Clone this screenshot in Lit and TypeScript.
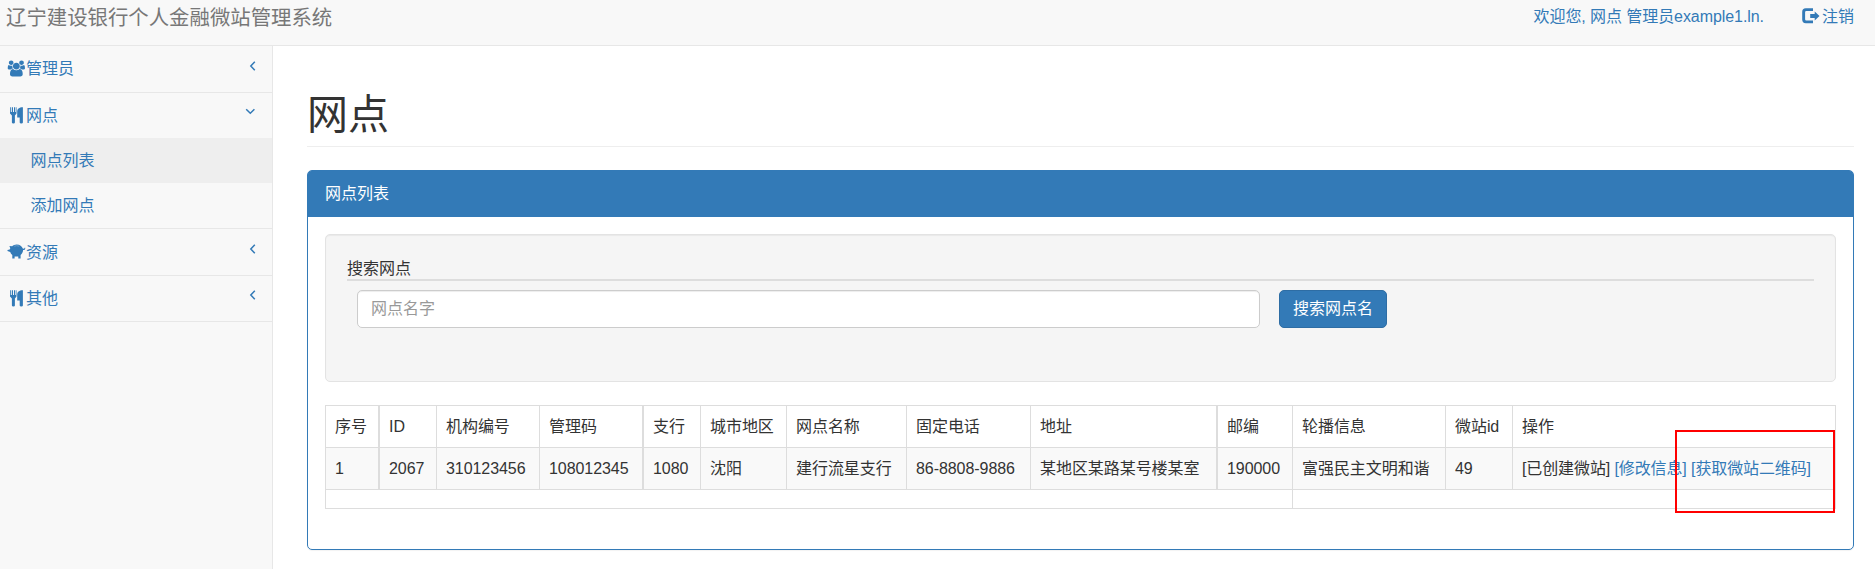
import { LitElement, html, css, svg } from "lit";
import { customElement } from "lit/decorators.js";
import { classMap } from "lit/directives/class-map.js";

const usersIcon = html`<svg class="icon" width="19" height="17" viewBox="-142 -50 2109 1904" preserveAspectRatio="none"><path d="M529 896q-162 5-265 128h-134q-82 0-138-40.500t-56-118.500q0-353 124-353 6 0 43.500 21t97.500 42.500 119 21.500q67 0 133-23-5 37-5 66 0 139 81 256zm1071 637q0 120-73 189.500t-194 69.500h-874q-121 0-194-69.500t-73-189.500q0-53 3.500-103.500t14-109 26.500-108.500 43-97.500 62-81 85.500-53.500 111.500-20q10 0 43 21.500t73 48 107 48 135 21.500 135-21.500 107-48 73-48 43-21.500q61 0 111.500 20t85.500 53.500 62 81 43 97.500 26.500 108.500 14 109 3.500 103.500zm-1024-1277q0 106-75 181t-181 75-181-75-75-181 75-181 181-75 181 75 75 181zm704 384q0 159-112.500 271.500t-271.500 112.500-271.500-112.500-112.500-271.500 112.500-271.500 271.500-112.500 271.500 112.500 112.500 271.500zm576 225q0 78-56 118.500t-138 40.500h-134q-103-123-265-128 81-117 81-256 0-29-5-66 66 23 133 23 59 0 119-21.500t97.500-42.500 43.500-21q124 0 124 353zm-128-609q0 106-75 181t-181 75-181-75-75-181 75-181 181-75 181 75 75 181z"/></svg>`;

const cutleryIcon = html`<svg class="icon" width="19" height="17" viewBox="0 0 19 17"><path d="M3 .2h.8V5h1V.2h1.200V5h1V.2h1.200V5h.7V.2h.6v6.300L7.900 8.400V15.400Q7.900 16.500 6.400 16.500T4.900 15.400V8.400L3 6.500zM15.900.2V15.400Q15.900 16.500 14.300 16.500T12.700 15.400V10.400H10.200V4.500C10.300 2 12 .2 15.900.2z"/></svg>`;

const piggyIcon = html`<svg class="icon" width="19" height="17" viewBox="0 0 19 17"><path d="M3.300 4.300 2.400 2.100 5.200 2.300C6.200 1.100 7.700.4 9.700.4c3.200 0 5.300 1.700 6.100 4.200l1 .1c.5 0 .7-.3.7-1h.8c0 1.500-.6 2.300-1.700 2.300l-.5 0c-.1 2-1 3.800-2.500 4.900v3.500h-2.300v-2H7.600v2H5.300V10.900C4.300 10.200 3.600 9.200 3.200 8L.5 7.100V5.900L2.700 5.500z"/><path class="slot" d="M7.200 2.200q2.500-1 5 0" /></svg>`;

const logoutIcon = html`<svg class="icon" width="18" height="16" viewBox="0 0 18 16"><path d="M11 .3H3.800Q.2.300.2 3.900v7.700q0 3.600 3.600 3.600H11v-2.700H4.300Q3.100 12.500 3.100 11.300V4.300Q3.100 3 4.300 3H11zM17.500 8 12.700 3.500v2.400H8.200v4.200h4.500v2.400z"/></svg>`;

interface Entry {
  label: string;
  icon: unknown;
  size: string;
  open?: boolean;
  children?: string[];
}

const ENTRIES: Entry[] = [
  { label: "管理员", icon: usersIcon, size: "tall first" },
  { label: "网点", icon: cutleryIcon, size: "short", open: true, children: ["网点列表", "添加网点"] },
  { label: "资源", icon: piggyIcon, size: "tall" },
  { label: "其他", icon: cutleryIcon, size: "short" },
];

@customElement("side-menu")
export class SideMenu extends LitElement {
  static styles = css`
    :host { display: block; width: 272px; flex: none; background: #f8f8f8; border-right: 1px solid #e7e7e7; }
    .group { border-bottom: 1px solid #e7e7e7; }
    .row { display: flex; align-items: center; box-sizing: border-box; height: 45px; padding: 0 15px 0 7px; color: #337ab7; }
    .row.tall { height: 46px; }
    .row.first { padding-bottom: 2px; }
    .label { flex: 1; }
    .icon { display: block; fill: currentColor; flex: none; }
    .slot { fill: none; stroke: #8db5d9; stroke-width: .6; }
    .arrow { display: block; fill: none; stroke: currentColor; stroke-width: 1.500; margin-bottom: 7px; }
    .first .arrow { margin-bottom: 4px; }
    .child { display: flex; align-items: center; height: 45px; padding-left: 30.500px; color: #337ab7; }
    .child.active { background: #eee; }
  `;
  render() {
    return ENTRIES.map(
      (e) => html`<div class="group">
        <div class="row ${e.size}">
          ${e.icon}<span class="label">${e.label}</span>
          <svg class="arrow" width="12" height="12" viewBox="0 0 12 12">
            ${e.open ? svg`<path d="M1.200 3.200 5.300 7.200 9.400 3.200"/>` : svg`<path d="M9.800 1.700 5.800 6 9.800 10.300"/>`}
          </svg>
        </div>
        ${(e.children ?? []).map((c, i) => html`<div class=${classMap({ child: true, active: i === 0 })}>${c}</div>`)}
      </div>`
    );
  }
}

const HEADS = ["序号", "ID", "机构编号", "管理码", "支行", "城市地区", "网点名称", "固定电话", "地址", "邮编", "轮播信息", "微站id", "操作"];
const VALUES = ["1", "2067", "310123456", "108012345", "1080", "沈阳", "建行流星支行", "86-8808-9886", "某地区某路某号楼某室", "190000", "富强民主文明和谐", "49"];
const THICK = new Set([0, 3, 8]);

@customElement("branch-table")
export class BranchTable extends LitElement {
  static styles = css`
    :host { display: block; position: relative; }
    .grid { display: grid; grid-template-columns: 54px 57px 103px 104px 57px 86px 120px 124px 187px 75px 153px 67px 323px; grid-template-rows: 42px 42px 19px; border: solid #ddd; border-width: 1px 0 0 1px; }
    .cell { box-sizing: border-box; border: solid #ddd; border-width: 0 1px 1px 0; padding: 0 0 0 9px; line-height: 41px; white-space: nowrap; letter-spacing: -.06px; }
    .cell.thick { border-right-width: 2px; }
    .cell.odd { background: #f9f9f9; }
    .cell.actions { letter-spacing: -.11px; }
    .left { grid-column: span 10; }
    .right { grid-column: span 3; }
    .link { color: #337ab7; }
    .mark { position: absolute; right: 1px; top: 25px; width: 160px; height: 83px; box-sizing: border-box; border: 2px solid #f00; }
  `;
  render() {
    return html`<div class="grid">
        ${HEADS.map((h, i) => html`<div class=${classMap({ cell: true, thick: THICK.has(i) })}>${h}</div>`)}
        ${VALUES.map((v, i) => html`<div class=${classMap({ cell: true, odd: true, thick: THICK.has(i) })}>${v}</div>`)}
        <div class="cell odd actions">[已创建微站] <span class="link">[修改信息]</span> <span class="link">[获取微站二维码]</span></div>
        <div class="cell left"></div>
        <div class="cell right"></div>
      </div>
      <div class="mark"></div>`;
  }
}

@customElement("app-root")
export class AppRoot extends LitElement {
  static styles = css`
    :host { display: flex; flex-direction: column; height: 569px; overflow: hidden; background: #fff; color: #333; font: 16px/23px "Liberation Sans", "Noto Sans CJK SC", sans-serif; }
    .top { display: flex; justify-content: space-between; box-sizing: border-box; height: 46px; flex: none; background: #f8f8f8; border-bottom: 1px solid #e7e7e7; padding: 5px 21px 0 6px; }
    .brand { font-size: 20.400px; color: #777; line-height: 26px; }
    .user { display: flex; gap: 38px; color: #337ab7; }
    .greeting { letter-spacing: -.07px; }
    .logout { display: flex; gap: 2px; }
    .icon { display: block; fill: currentColor; margin-top: 3px; }
    .body { display: flex; flex: 1; min-height: 0; }
    .main { flex: 1; padding: 0 21px 0 34px; }
    .title { box-sizing: border-box; height: 101px; margin: 0 0 23px; padding-top: 47px; font-size: 41px; font-weight: 400; line-height: 45px; border-bottom: 1px solid #eee; }
    .panel { box-sizing: border-box; height: 380px; border: 1px solid #337ab7; border-radius: 5px; box-shadow: 0 1px 1px rgba(0, 0, 0, .05); }
    .heading { height: 46px; line-height: 45px; padding-left: 17px; background: #337ab7; color: #fff; border-radius: 3px 3px 0 0; }
    .content { padding: 17px; }
    .well { box-sizing: border-box; height: 148px; border: 1px solid #e3e3e3; border-radius: 5px; background: #f5f5f5; padding: 22px 21px 0; box-shadow: inset 0 1px 1px rgba(0, 0, 0, .05); margin-bottom: 23px; }
    .legend { box-sizing: border-box; height: 24px; border-bottom: 2px solid #ddd; }
    .form { display: flex; gap: 19px; padding: 9px 0 0 10px; }
    .input { box-sizing: border-box; width: 903px; height: 38px; border: 1px solid #ccc; border-radius: 5px; background: #fff; padding: 0 13px; line-height: 35px; color: #999; box-shadow: inset 0 1px 1px rgba(0, 0, 0, .075); }
    .button { box-sizing: border-box; width: 108px; height: 38px; border: 1px solid #2e6da4; border-radius: 5px; background: #337ab7; color: #fff; text-align: center; line-height: 35px; }
  `;
  render() {
    return html`
      <div class="top">
        <div class="brand">辽宁建设银行个人金融微站管理系统</div>
        <div class="user">
          <span class="greeting">欢迎您, 网点 管理员example1.ln.</span>
          <span class="logout">${logoutIcon}<span>注销</span></span>
        </div>
      </div>
      <div class="body">
        <side-menu></side-menu>
        <div class="main">
          <h1 class="title">网点</h1>
          <div class="panel">
            <div class="heading">网点列表</div>
            <div class="content">
              <div class="well">
                <div class="legend">搜索网点</div>
                <div class="form">
                  <div class="input">网点名字</div>
                  <div class="button">搜索网点名</div>
                </div>
              </div>
              <branch-table></branch-table>
            </div>
          </div>
        </div>
      </div>
    `;
  }
}
